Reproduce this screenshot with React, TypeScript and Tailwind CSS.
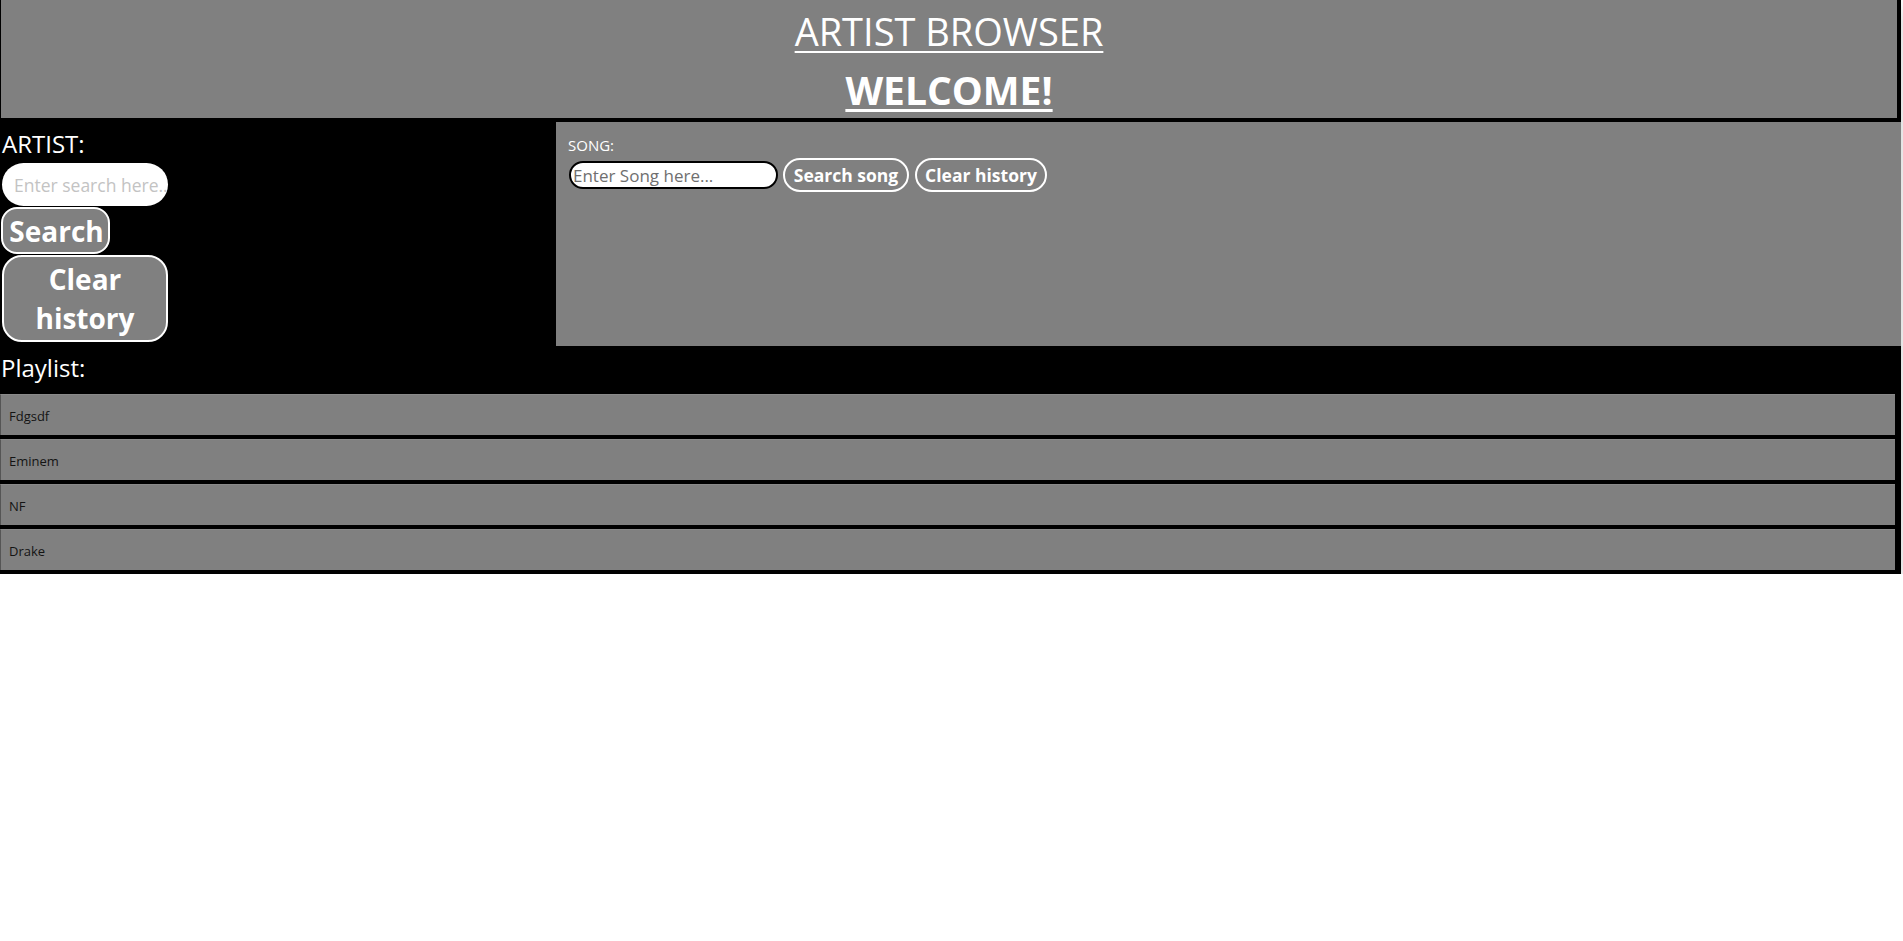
const playlist = ['Fdgsdf', 'Eminem', 'NF', 'Drake'];

const App = () => {
  return (
    <div className="w-[1901px] bg-black pb-[4px] font-['Open_Sans',sans-serif] shadow-[0_8px_18px_rgba(0,0,0,0.22)]">
      <header className="ml-[1px] mr-[4px] h-[118px] bg-[#808080] text-center text-white">
        <h1 className="pt-[4px] text-[38px] leading-[54px] underline decoration-2 underline-offset-[5px]">
          ARTIST BROWSER
        </h1>
        <h2 className="mt-[5px] text-[39px] font-bold leading-[54px] underline decoration-[3px] underline-offset-[4px]">
          WELCOME!
        </h2>
      </header>

      <div className="mt-[4px] flex h-[224px]">
        <div className="w-[556px] bg-black pt-[6px] text-white">
          <div className="pl-[2px] text-[24px] leading-[32px]">ARTIST:</div>
          <input
            type="text"
            placeholder="Enter search here..."
            className="mt-[3px] ml-[2px] block h-[43px] w-[166px] rounded-[22px] bg-white pl-[12px] text-[17.5px] text-black outline-none placeholder:text-[#c3c3c3]"
          />
          <button className="mt-[1px] ml-[1px] block h-[47px] w-[109px] rounded-[16px] border-2 border-white bg-[#808080] pl-[2px] text-[28px] font-bold leading-none text-white">
            Search
          </button>
          <button className="mt-[1px] ml-[2px] block h-[87px] w-[166px] rounded-[20px] border-2 border-white bg-[#808080] text-[28px] font-bold leading-[39px] text-white">
            Clear
            <br />
            history
          </button>
        </div>

        <div className="flex-1 bg-[#808080] pl-[12px] pt-[14px] text-white">
          <div className="text-[15px] leading-[19px]">SONG:</div>
          <div className="mt-[3px] flex h-[34px] items-center">
            <input
              type="text"
              placeholder="Enter Song here..."
              className="ml-[1px] h-[28px] w-[209px] rounded-full border-2 border-black bg-white pl-[2px] text-[17px] text-black outline-none placeholder:text-[#6f6f6f]"
            />
            <button className="ml-[5px] h-[34px] w-[126px] rounded-full border-2 border-white text-[17.5px] font-bold text-white">
              Search song
            </button>
            <button className="ml-[6px] h-[34px] w-[132px] rounded-full border-2 border-white text-[17.5px] font-bold text-white">
              Clear history
            </button>
          </div>
        </div>
      </div>

      <div className="mt-[6px] pl-[1px] text-[24px] leading-[32px] text-white">
        Playlist:
      </div>
      <ul className="mt-[10px] flex flex-col gap-[4px]">
        {playlist.map((name) => (
          <li
            key={name}
            className="flex h-[41px] w-[1895px] items-center border-t border-l border-t-[#8a8a8a] border-l-[#555555] bg-[#808080] pt-[3px] pl-[8px] text-[13px] text-[#141414] shadow-[2px_1px_1px_rgba(0,0,0,0.7)]"
          >
            {name}
          </li>
        ))}
      </ul>
    </div>
  );
};

export default App;
